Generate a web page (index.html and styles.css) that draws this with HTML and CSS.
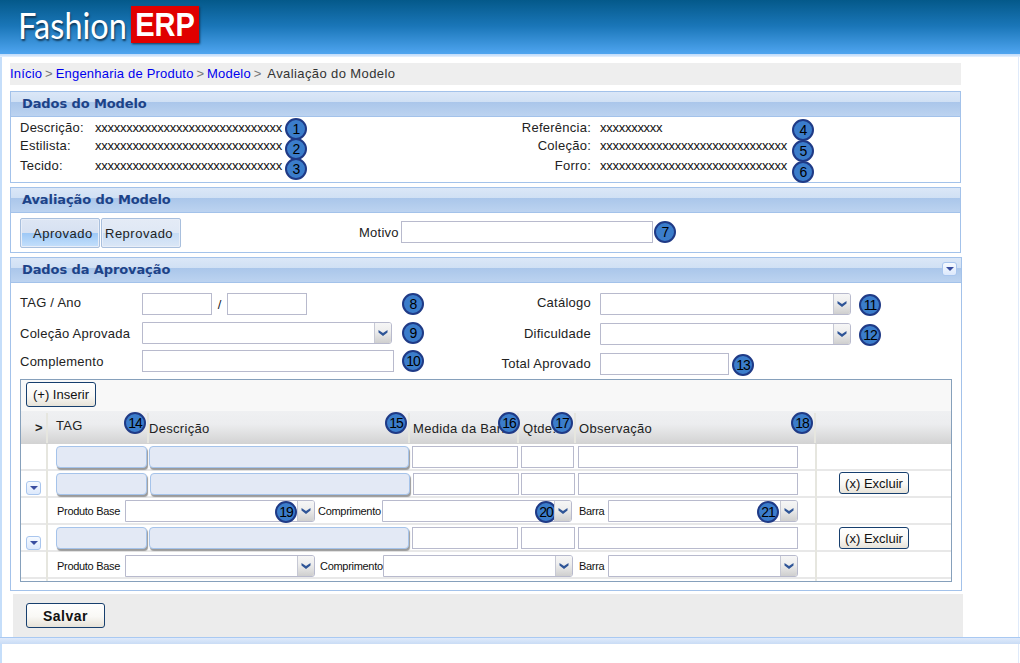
FILE: index.html
```html
<!DOCTYPE html>
<html lang="pt-BR">
<head>
    <meta charset="UTF-8">
    <title>Fashion ERP</title>
    <link rel="stylesheet" href="styles.css">
</head>
<body>
    <svg class="defs" width="0" height="0">
        <symbol id="chev" viewBox="0 0 10 6"><path d="M0.5 0 L5 3 L9.5 0 V2.5 L5 6 L0.5 2.5 Z"/></symbol>
    </svg>

    <header class="topbar">
        <span class="logo-name">Fashion</span>
        <span class="logo-erp"><span>ERP</span></span>
    </header>

    <main class="page">
        <nav class="crumbs">
            <a href="#">Início</a> <i>&gt;</i> <a href="#">Engenharia de Produto</a> <i>&gt;</i> <a href="#">Modelo</a> <i>&gt;</i> <span class="crumb-current">Avaliação do Modelo</span>
        </nav>

        <section class="panel">
            <h2 class="panel-title">Dados do Modelo</h2>
            <div class="info">
                <div class="info-col">
                    <div class="info-list">
                        <div class="info-row"><span class="info-label">Descrição:</span><span class="info-value">xxxxxxxxxxxxxxxxxxxxxxxxxxxxxx</span></div>
                        <div class="info-row"><span class="info-label">Estilista:</span><span class="info-value">xxxxxxxxxxxxxxxxxxxxxxxxxxxxxx</span></div>
                        <div class="info-row"><span class="info-label">Tecido:</span><span class="info-value">xxxxxxxxxxxxxxxxxxxxxxxxxxxxxx</span></div>
                    </div>
                    <div class="badge-stack">
                        <span class="badge">1</span>
                        <span class="badge">2</span>
                        <span class="badge">3</span>
                    </div>
                </div>
                <div class="info-col info-col-right">
                    <div class="info-list">
                        <div class="info-row"><span class="info-label">Referência:</span><span class="info-value">xxxxxxxxxx</span></div>
                        <div class="info-row"><span class="info-label">Coleção:</span><span class="info-value">xxxxxxxxxxxxxxxxxxxxxxxxxxxxxx</span></div>
                        <div class="info-row"><span class="info-label">Forro:</span><span class="info-value">xxxxxxxxxxxxxxxxxxxxxxxxxxxxxx</span></div>
                    </div>
                    <div class="badge-stack">
                        <span class="badge">4</span>
                        <span class="badge">5</span>
                        <span class="badge">6</span>
                    </div>
                </div>
            </div>
        </section>

        <section class="panel">
            <h2 class="panel-title">Avaliação do Modelo</h2>
            <div class="review">
                <button class="toggle toggle-on">Aprovado</button>
                <button class="toggle">Reprovado</button>
                <label class="motivo-label">Motivo</label>
                <input class="field motivo-input" type="text">
                <span class="badge">7</span>
            </div>
        </section>

        <section class="panel panel-wide">
            <h2 class="panel-title">Dados da Aprovação<span class="collapse"><b></b></span></h2>
            <div class="approval">
                <div class="approval-left">
                    <div class="form-row">
                        <label class="form-label">TAG / Ano</label>
                        <input class="field tag-input" type="text">
                        <span class="slash">/</span>
                        <input class="field year-input" type="text">
                        <span class="badge badge-end">8</span>
                    </div>
                    <div class="form-row">
                        <label class="form-label">Coleção Aprovada</label>
                        <div class="combo combo-left"><svg class="combo-arrow"><use href="#chev" x="3" y="7" width="10" height="6"/></svg></div>
                        <span class="badge badge-end">9</span>
                    </div>
                    <div class="form-row">
                        <label class="form-label">Complemento</label>
                        <input class="field complement-input" type="text">
                        <span class="badge badge-end">10</span>
                    </div>
                </div>
                <div class="approval-right">
                    <div class="form-row">
                        <label class="form-label">Catálogo</label>
                        <div class="combo combo-right"><svg class="combo-arrow"><use href="#chev" x="3" y="7" width="10" height="6"/></svg></div>
                        <span class="badge badge-next">11</span>
                    </div>
                    <div class="form-row">
                        <label class="form-label">Dificuldade</label>
                        <div class="combo combo-right"><svg class="combo-arrow"><use href="#chev" x="3" y="7" width="10" height="6"/></svg></div>
                        <span class="badge badge-next">12</span>
                    </div>
                    <div class="form-row">
                        <label class="form-label">Total Aprovado</label>
                        <input class="field total-input" type="text">
                        <span class="badge badge-close">13</span>
                    </div>
                </div>
            </div>

            <div class="grid">
                <div class="grid-tools"><button class="btn btn-insert">(+) Inserir</button></div>
                <div class="grid-head">
                    <div class="head-cell head-expand">&gt;</div>
                    <div class="head-cell head-tag">TAG<span class="badge badge-head">14</span></div>
                    <div class="head-cell head-desc">Descrição<span class="badge badge-head">15</span></div>
                    <div class="head-cell head-medida"><span class="head-clip">Medida da Barra</span><span class="badge badge-head badge-head-over">16</span></div>
                    <div class="head-cell head-qtde"><span class="head-clip">Qtde.</span><span class="badge badge-head">17</span></div>
                    <div class="head-cell head-obs">Observação<span class="badge badge-head">18</span></div>
                    <div class="head-cell head-end"></div>
                </div>

                <div class="grid-row row-first">
                    <div class="row-expand"></div>
                    <input class="cell-blue cell-tag" type="text">
                    <input class="cell-blue cell-desc" type="text">
                    <input class="field cell-medida" type="text">
                    <input class="field cell-qtde" type="text">
                    <input class="field cell-obs" type="text">
                    <div class="row-action"></div>
                </div>

                <div class="grid-row row-shift">
                    <div class="row-expand"><span class="collapse"><b></b></span></div>
                    <input class="cell-blue cell-tag" type="text">
                    <input class="cell-blue cell-desc" type="text">
                    <input class="field cell-medida" type="text">
                    <input class="field cell-qtde" type="text">
                    <input class="field cell-obs" type="text">
                    <div class="row-action"><button class="btn btn-delete">(x) Excluir</button></div>
                </div>
                <div class="grid-row grid-sub">
                    <div class="row-expand"></div>
                    <span class="sub-label sub-base">Produto Base</span>
                    <div class="combo combo-sub"><span class="badge badge-19">19</span><svg class="combo-arrow"><use href="#chev" x="3" y="7" width="10" height="6"/></svg></div>
                    <span class="sub-label sub-length">Comprimento</span>
                    <div class="combo combo-sub"><span class="badge badge-20">20</span><svg class="combo-arrow"><use href="#chev" x="3" y="7" width="10" height="6"/></svg></div>
                    <span class="sub-label sub-bar">Barra</span>
                    <div class="combo combo-sub"><span class="badge badge-21">21</span><svg class="combo-arrow"><use href="#chev" x="3" y="7" width="10" height="6"/></svg></div>
                    <div class="row-action"></div>
                </div>

                <div class="grid-row row-last">
                    <div class="row-expand"><span class="collapse"><b></b></span></div>
                    <input class="cell-blue cell-tag" type="text">
                    <input class="cell-blue cell-desc" type="text">
                    <input class="field cell-medida" type="text">
                    <input class="field cell-qtde" type="text">
                    <input class="field cell-obs" type="text">
                    <div class="row-action"><button class="btn btn-delete">(x) Excluir</button></div>
                </div>
                <div class="grid-row grid-sub sub-shift">
                    <div class="row-expand"></div>
                    <span class="sub-label sub-base">Produto Base</span>
                    <div class="combo combo-sub"><svg class="combo-arrow"><use href="#chev" x="3" y="7" width="10" height="6"/></svg></div>
                    <span class="sub-label sub-length">Comprimento</span>
                    <div class="combo combo-sub"><svg class="combo-arrow"><use href="#chev" x="3" y="7" width="10" height="6"/></svg></div>
                    <span class="sub-label sub-bar">Barra</span>
                    <div class="combo combo-sub"><svg class="combo-arrow"><use href="#chev" x="3" y="7" width="10" height="6"/></svg></div>
                    <div class="row-action"></div>
                </div>
                <div class="grid-foot"><div class="row-expand"></div><div class="row-action"></div></div>
            </div>
        </section>

        <div class="actions"><button class="btn btn-save">Salvar</button></div>
    </main>
    <footer class="bottom"></footer>
    <div class="bottom-rest"></div>
</body>
</html>
```

FILE: styles.css
```css
* { box-sizing: border-box; }
html, body { height: 100%; }
body {
    margin: 0;
    background: #fff;
    font-family: "Liberation Sans", Arial, sans-serif;
    font-size: 13px;
    color: #222;
    overflow: hidden;
}
.defs { position: absolute; }

/* topo */
.topbar {
    height: 57px;
    padding: 6px 0 0 18px;
    display: flex;
    align-items: flex-start;
    background: linear-gradient(#04598a 0, #1a76b8 26px, #4fa5f0 54px, #c5defa 54px, #c5defa 55px, #e8f2fd 57px);
}
.logo-name {
    width: 113px;
    font-family: Lato, sans-serif;
    font-size: 37px;
    line-height: 38px;
    color: #fff;
    transform: scaleX(0.88);
    transform-origin: left;
    text-shadow: 1px 2px 2px #123a5a;
}
.logo-erp {
    width: 68px;
    height: 37px;
    background: #e00000;
    color: #fff;
    font-weight: bold;
    font-size: 33px;
    line-height: 37px;
    text-align: center;
    box-shadow: 1px 1px 2px #123a5a;
}
.logo-erp span { display: block; transform: scaleX(0.88); }

.page {
    height: 580px;
    padding: 6px 0 0 8px;
    border-left: 2px solid #c5defa;
    border-right: 1px solid #dfeafa;
    width: 1019px;
}
.crumbs {
    width: 951px;
    height: 22px;
    line-height: 22px;
    background: #eee;
    margin-bottom: 6px;
    letter-spacing: 0.2px;
    color: #333;
}
.crumbs a { color: #0000ee; text-decoration: none; }
.crumbs i { font-style: normal; color: #777; margin: 0 -1px; }
.crumb-current { margin-left: 3px; letter-spacing: 0.4px; }

/* paineis */
.panel {
    width: 951px;
    border: 1px solid #a3c2ea;
    margin-bottom: 4px;
}
.panel-wide { width: 952px; margin-bottom: 3px; }
.panel-title {
    position: relative;
    margin: 0;
    height: 25px;
    padding-left: 11px;
    font-family: "DejaVu Sans", sans-serif;
    font-size: 13px;
    font-weight: bold;
    line-height: 23px;
    letter-spacing: -0.1px;
    color: #1d4388;
    background: linear-gradient(#dbe7f7 0, #d0e0f4 10px, #aac6ea 10px, #bcd3f0 100%);
    border-bottom: 1px solid #a3c2ea;
}
.collapse {
    display: inline-flex;
    justify-content: center;
    align-items: center;
    width: 15px;
    height: 14px;
    background: linear-gradient(#f6faff, #dde9fc);
    border: 1px solid #a9c6ee;
    border-radius: 3px;
}
.collapse b {
    border: 4px solid transparent;
    border-top: 4px solid #3a4ea0;
    border-bottom: 0;
}
.panel-title .collapse { position: absolute; right: 4px; top: 4px; }

/* numeros */
.badge {
    display: inline-block;
    flex: none;
    width: 22px;
    height: 22px;
    border: 2px solid #1f3a86;
    border-radius: 50%;
    background: #3b7dcb;
    color: #000;
    font-family: "Liberation Sans", Arial, sans-serif;
    font-size: 14px;
    font-weight: normal;
    line-height: 19px;
    letter-spacing: -1px;
    text-align: center;
}
.badge-head { position: absolute; top: -1px; right: 1px; }
.badge-head-over { right: -3px; }
.badge-19, .badge-20, .badge-21 { position: absolute; top: 0; }
.badge-19 { right: 17px; }
.badge-20 { right: 14px; }
.badge-21 { right: 18px; }

/* dados do modelo */
.info { display: flex; padding-left: 9px; height: 65px; }
.info-col { display: flex; width: 470px; }
.info-list { padding-top: 2px; width: 265px; }
.info-col-right { width: auto; }
.info-col-right .info-list { width: 297px; }
.info-row { display: flex; height: 20px; line-height: 18px; }
.info-row:first-child { height: 18px; }
.info-label { width: 75px; flex: none; letter-spacing: 0.25px; }
.info-col-right .info-label { width: 101px; text-align: right; margin-right: 9px; }
.info-value { letter-spacing: -0.27px; color: #111; }
.badge-stack { display: flex; flex-direction: column; padding-top: 1px; }
.badge-stack .badge { margin-bottom: -2px; }
.info-col-right .badge-stack { margin-left: 5px; padding-top: 2px; }
.info-col-right .badge-stack .badge { margin-bottom: -1px; }

/* avaliacao */
.review { display: flex; align-items: center; padding: 5px 0 4px 9px; height: 39px; }
.review .motivo-label, .review .motivo-input, .review .badge { margin-top: -2px; }
.toggle {
    width: 80px;
    height: 30px;
    margin-right: 1px;
    padding: 0 0 0 3px;
    font: 13px "Liberation Sans", Arial, sans-serif;
    letter-spacing: 0.5px;
    color: #222;
    text-align: left;
    background: linear-gradient(#e4ebf6 0, #dfe8f5 50%, #c6dcf5 50%, #dbe7f6 100%);
    border: 1px solid #a8bfdd;
    border-radius: 2px;
    box-shadow: inset 0 0 0 1px #e8eef8;
}
.toggle-on {
    padding-left: 12px;
    background: linear-gradient(#dde6f4 0, #d6e1f2 50%, #9dc8f6 50%, #c5e0fb 100%);
}
.motivo-label { margin-left: 177px; width: 42px; letter-spacing: 0.25px; }
.motivo-input { width: 252px; height: 22px; margin-right: 1px; }

.field {
    height: 22px;
    padding: 0 2px;
    border: 1px solid #b8bacd;
    background: #fff;
    border-radius: 0;
    outline: none;
}

/* dados da aprovacao */
.approval { display: flex; padding: 10px 0 0 9px; height: 96px; }
.approval-left { width: 470px; }
.approval-left .form-row { width: 404px; margin-bottom: 7px; }
.approval-left .form-row + .form-row { margin-bottom: 6px; }
.approval-right .form-row { margin-bottom: 8px; }
.approval-right .badge { margin-top: 2px; }
.form-row { display: flex; align-items: center; height: 22px; }
.form-label { width: 122px; flex: none; letter-spacing: 0.25px; }
.form-row:first-child .form-label { margin-top: -3px; }
.approval-right .form-label { width: 101px; margin-top: -2px; margin-right: 9px; text-align: right; }
.tag-input { width: 70px; }
.slash { width: 15px; text-align: center; }
.year-input { width: 80px; }
.complement-input { width: 252px; }
.total-input { width: 129px; }
.badge-end { margin-left: auto; }
.badge-next { margin-left: 8px; }
.badge-close { margin-left: 3px; }

.combo {
    position: relative;
    flex: none;
    height: 22px;
    border: 1px solid #b8bacd;
    border-radius: 0 3px 3px 0;
    background: #fff;
}
.combo-arrow {
    position: absolute;
    top: 0;
    right: 0;
    width: 17px;
    height: 20px;
    fill: #2f5597;
    border-left: 1px solid #c6c8d4;
    background: linear-gradient(#f6f6f6 0, #eee 40%, #cfcfcf 100%);
    border-radius: 0 2px 2px 0;
}
.combo-left { width: 250px; }
.combo-right { width: 251px; }
.combo-sub { width: 190px; }

/* grade */
.grid {
    width: 932px;
    height: 203px;
    margin: 0 0 8px 9px;
    border: 1px solid #86a0bb;
    overflow: hidden;
}
.grid-tools { height: 31px; padding: 2px 0 0 5px; background: #f8f8f8; }
.btn {
    padding: 0;
    font: 13px "Liberation Sans", Arial, sans-serif;
    color: #111;
    background: linear-gradient(#fff 0, #f9f8f5 55%, #e6e2d8 100%);
    border: 1px solid #173f6e;
    border-radius: 3px;
}
.btn-insert { width: 70px; height: 25px; }
.btn-delete { width: 70px; height: 22px; }
.btn-save {
    width: 79px;
    height: 25px;
    font-weight: bold;
    font-size: 14px;
    letter-spacing: 0.5px;
}

.grid-head {
    display: flex;
    height: 33px;
    background: linear-gradient(#eff0f2 0, #ecedef 40%, #d2d2d2 100%);
}
.head-cell {
    position: relative;
    padding: 7px 0 0 0;
    line-height: 17px;
    letter-spacing: 0.3px;
    border-right: 2px solid #e6e6df;
    margin-top: 2px;
    margin-bottom: 1px;
}
.head-expand { width: 27px; padding: 6px 0 0 14px; font-weight: bold; }
.head-tag { width: 101px; padding-left: 8px; padding-top: 4px; }
.head-desc { width: 261px; }
.head-medida { width: 109px; padding-left: 3px; white-space: nowrap; }
.head-clip { display: block; overflow: hidden; }
.head-qtde { width: 57px; padding-left: 4px; }
.head-obs { width: 240px; padding-left: 3px; }
.head-end { flex: 1; border-right: 0; }

.grid-row {
    display: flex;
    align-items: flex-start;
    height: 27px;
    padding-top: 2px;
    border-bottom: 2px solid #e8e8e8;
}
.row-expand {
    flex: none;
    align-self: stretch;
    width: 27px;
    margin: -2px 0;
    padding: 7px 0 0 5px;
    border-right: 2px solid #e6e6df;
}
.row-last .row-expand { padding-top: 8px; }
.row-action {
    flex: none;
    align-self: stretch;
    width: 136px;
    margin: -2px 0 -2px auto;
    padding: 2px 0 0 22px;
    border-left: 2px solid #e6e6df;
}
.row-shift .row-action { padding-top: 1px; }
.cell-blue {
    height: 22px;
    padding: 0;
    border: 1px solid #a5c3ea;
    border-radius: 4px;
    background: #e3e9f5;
    box-shadow: 1px 2px 1px #9a9a9a;
    outline: none;
}
.cell-tag { width: 91px; margin-left: 8px; }
.cell-desc { width: 260px; margin-left: 2px; }
.cell-medida { width: 106px; margin-left: 3px; }
.cell-qtde { width: 54px; margin-left: 3px; }
.cell-obs { width: 220px; margin-left: 3px; }
.row-first .cell-qtde { width: 53px; }
.row-first .cell-obs { margin-left: 4px; }
.row-shift .cell-desc { margin-left: 3px; }
.row-shift .cell-qtde { margin-left: 2px; }

.sub-label { flex: none; font-size: 11px; line-height: 22px; letter-spacing: -0.3px; white-space: nowrap; color: #111; }
.sub-base { width: 68px; margin-left: 9px; }
.sub-length { width: 64px; margin-left: 3px; }
.sub-bar { width: 29px; margin-left: 7px; }
.sub-shift { padding-top: 3px; }
.sub-shift .sub-length { margin-left: 5px; width: 63px; }
.sub-shift .sub-bar { margin-left: 6px; }
.sub-shift .row-expand { margin-top: -3px; }
.sub-shift .row-action { margin-top: -3px; }

.grid-foot { display: flex; height: 2px; }
.grid-foot .row-expand, .grid-foot .row-action { padding: 0; margin: 0; }
.grid-foot .row-action { margin-left: auto; }

.actions {
    width: 950px;
    height: 43px;
    margin-left: 3px;
    padding: 9px 0 0 13px;
    background: #ececec;
}
.bottom {
    height: 7px;
    background: linear-gradient(#a9c9f2 0, #a9c9f2 1px, #dfeafb 1px, #c9dcf5 100%);
}
.bottom-rest {
    height: 19px;
    width: 1019px;
    border-left: 2px solid #c5defa;
    border-right: 1px solid #dfeafa;
}
```
